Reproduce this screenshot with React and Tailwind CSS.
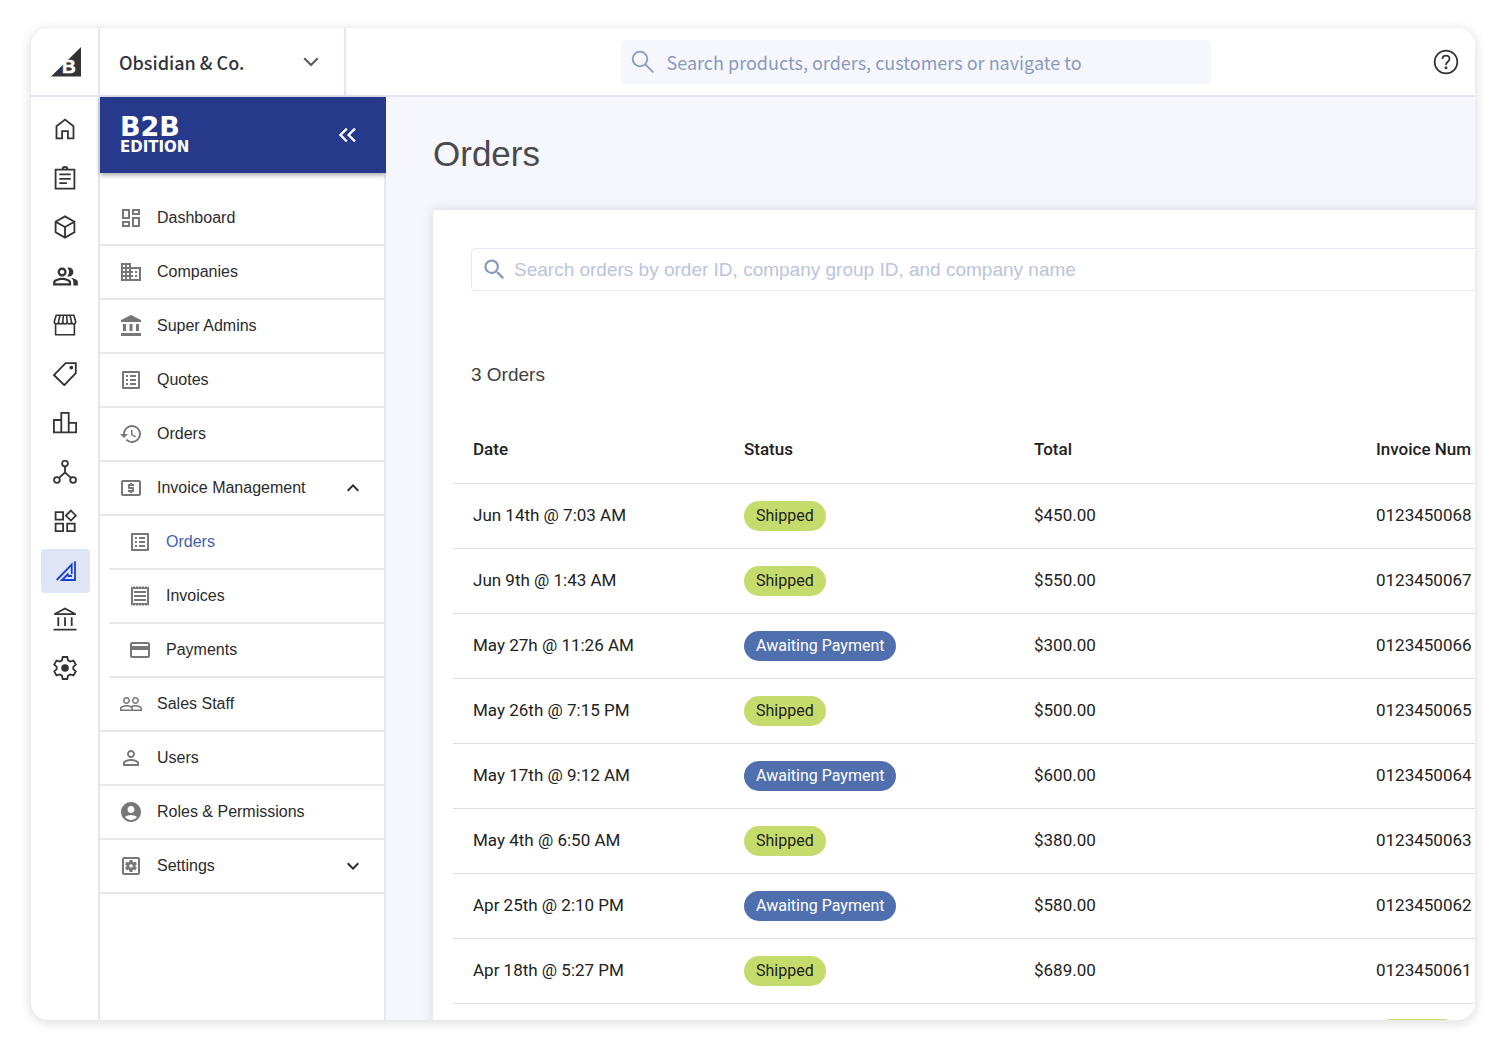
import React from 'react';
import {
    MdOutlineDashboard,
    MdDomain,
    MdAccountBalance,
    MdOutlineListAlt,
    MdHistory,
    MdOutlineLocalAtm,
    MdOutlineReceipt,
    MdOutlinePayment,
    MdPeopleOutline,
    MdPersonOutline,
    MdAccountCircle,
    MdOutlineSettingsApplications,
    MdOutlinePeopleAlt,
    MdSearch,
    MdExpandLess,
    MdExpandMore,
} from 'react-icons/md';

const Icon = ({ children, className = 'size-6', strokeWidth = 1.8 }) => (
    <svg
        viewBox="0 0 24 24"
        className={className}
        fill="none"
        stroke="currentColor"
        strokeWidth={strokeWidth}
        aria-hidden="true"
    >
        {children}
    </svg>
);

const railItems = [
    {
        label: 'Home',
        icon: <Icon><path d="M3.5 9.3 12 2.6l8.5 6.7v12h-5.6v-7.2H9.1v7.2H3.5z" /></Icon>,
    },
    {
        label: 'Orders',
        icon: (
            <Icon>
                <path d="M2.6 3.6h18.8v19H2.6zM6.3 8.4h11.4M6.3 12.8h11.4M6.3 17.2h7.6" />
                <path d="M9.6 3.4a2.4 2.4 0 0 1 4.8 0" />
            </Icon>
        ),
    },
    {
        label: 'Products',
        icon: <Icon><path d="m12 1.4 9.4 5.3v10.6L12 22.6l-9.4-5.3V6.7zM2.6 6.7 12 12l9.4-5.3M12 12v10.6" /></Icon>,
    },
    { label: 'Customers', icon: <MdOutlinePeopleAlt className="size-[27px]" /> },
    {
        label: 'Storefront',
        icon: (
            <Icon strokeWidth={1.6}>
                <path d="M2.6 10.5v11.3h18.8V10.5M3.2 2.2h17.6l1.9 6.5c0 3-4.2 3-4.2 0 0 3-4.3 3-4.3 0 0 3-4.4 3-4.4 0 0 3-4.3 3-4.3 0 0 3-4.2 3-4.2 0zM7 2.2 5.5 8.700M10.4 2.200l-.6 6.500M13.600 2.200l.6 6.500M17 2.200l1.500 6.500" />
            </Icon>
        ),
    },
    {
        label: 'Marketing',
        icon: (
            <Icon>
                <path d="M12.6 1.2h10.2v9.9L11.3 23.2.9 13z" />
                <circle cx="18.3" cy="5.6" r="1" fill="currentColor" />
            </Icon>
        ),
    },
    {
        label: 'Analytics',
        icon: <Icon><path d="M.9 9h7.4v12.4H.9zM8.3 1.9h7.4v19.5H8.3zM15.7 11.8h7.4v9.6h-7.4z" /></Icon>,
    },
    {
        label: 'Channels',
        icon: (
            <Icon>
                <circle cx="12" cy="3.6" r="2.9" />
                <circle cx="3.9" cy="20" r="2.9" />
                <circle cx="20.1" cy="20" r="2.9" />
                <path d="M12 6.5v6M6 17.9l6-5.4 6 5.4" />
            </Icon>
        ),
    },
    {
        label: 'Apps',
        icon: (
            <Icon>
                <path d="M2.6 3.1h7.5v7.5H2.6zM2.6 14.7h7.5v7.5H2.6zM14.2 14.7h7.5v7.5h-7.5zM17.9 1.6l5 5-5 5-5-5z" />
            </Icon>
        ),
    },
    {
        label: 'B2B Edition',
        active: true,
        icon: <Icon><path d="M3.7 22 18.7 6.5V16M22 3.3V22H9l6.5-6.5M14.5 18H19" /></Icon>,
    },
    {
        label: 'Finance',
        icon: (
            <Icon>
                <path d="M1.3 7.2 12 1.4l10.7 5.8zM5.3 10.2V19M12 10.2V19M18.7 10.2V19M.5 22.6h23" />
            </Icon>
        ),
    },
    {
        label: 'Settings',
        icon: (
            <Icon>
                <path d="M9.7 1h4.6l.7 3.3 2.3 1.3 3.2-1 2.3 4-2.5 2.200v2.400l2.500 2.200-2.300 4-3.200-1-2.300 1.300-.7 3.300H9.700L9 19.700l-2.300-1.300-3.200 1-2.300-4 2.500-2.200v-2.400L1.200 8.600l2.300-4 3.200 1L9 4.300z" />
                <circle cx="12" cy="12" r="2.9" fill="currentColor" />
            </Icon>
        ),
    },
];

const menuItems = [
    { label: 'Dashboard', icon: MdOutlineDashboard },
    { label: 'Companies', icon: MdDomain },
    { label: 'Super Admins', icon: MdAccountBalance },
    { label: 'Quotes', icon: MdOutlineListAlt },
    { label: 'Orders', icon: MdHistory },
    {
        label: 'Invoice Management',
        icon: MdOutlineLocalAtm,
        open: true,
        children: [
            { label: 'Orders', icon: MdOutlineListAlt, active: true },
            { label: 'Invoices', icon: MdOutlineReceipt },
            { label: 'Payments', icon: MdOutlinePayment },
        ],
    },
    { label: 'Sales Staff', icon: MdPeopleOutline },
    { label: 'Users', icon: MdPersonOutline },
    { label: 'Roles & Permissions', icon: MdAccountCircle },
    { label: 'Settings', icon: MdOutlineSettingsApplications, open: false },
];

const orders = [
    { date: 'Jun 14th @ 7:03 AM', status: 'Shipped', total: '$450.00', invoice: '0123450068' },
    { date: 'Jun 9th @ 1:43 AM', status: 'Shipped', total: '$550.00', invoice: '0123450067' },
    { date: 'May 27h @ 11:26 AM', status: 'Awaiting Payment', total: '$300.00', invoice: '0123450066' },
    { date: 'May 26th @ 7:15 PM', status: 'Shipped', total: '$500.00', invoice: '0123450065' },
    { date: 'May 17th @ 9:12 AM', status: 'Awaiting Payment', total: '$600.00', invoice: '0123450064' },
    { date: 'May 4th @ 6:50 AM', status: 'Shipped', total: '$380.00', invoice: '0123450063' },
    { date: 'Apr 25th @ 2:10 PM', status: 'Awaiting Payment', total: '$580.00', invoice: '0123450062' },
    { date: 'Apr 18th @ 5:27 PM', status: 'Shipped', total: '$689.00', invoice: '0123450061' },
];

const StatusPill = ({ status }) => (
    <span
        className={`inline-flex h-[30px] items-center rounded-full px-3 text-base ${
            status === 'Shipped' ? 'bg-[#c5dc6c] text-[#222]' : 'bg-[#506fae] text-white'
        }`}
    >
        {status}
    </span>
);

const Logo = () => (
    <svg viewBox="0 0 30 30" className="size-[30px]" aria-hidden="true">
        <path d="M30 0v29.5H0z" fill="#343438" />
        <text x="11" y="25.5" fill="#fff" stroke="#fff" strokeWidth=".5" fontSize="19" fontWeight="700" fontFamily="Liberation Sans, sans-serif">
            B
        </text>
    </svg>
);

const TopBar = () => (
    <header className="flex h-[69px] shrink-0 border-b-2 border-[#e4e6f4] bg-white font-['Noto_Sans_CJK_SC',sans-serif]">
        <a href="#home" aria-label="Home" className="flex w-[69px] shrink-0 items-center justify-center border-r-2 border-[#e4e6f4] pl-0.5">
            <Logo />
        </a>
        <button className="flex w-[246px] shrink-0 items-center justify-between border-r-2 border-[#e4e6f4] pl-[19px] pr-6 text-lg font-medium text-[#313440]">
            Obsidian &amp; Co.
            <Icon className="size-[18px] text-[#5c5e66]" strokeWidth={3}><path d="m3 7 9 9 9-9" /></Icon>
        </button>
        <div className="flex min-w-0 flex-1 items-center pl-[10px]">
            <div className="flex-1 pl-4" />
            <label className="flex h-11 w-[590px] items-center gap-3 rounded-[4px] bg-[#f6f7fc] px-[10px] text-[#8c99bd]">
                <Icon className="size-6 shrink-0">
                    <circle cx="9" cy="9" r="7.3" />
                    <path d="m14.3 14.3 8 8" />
                </Icon>
                <input
                    type="search"
                    aria-label="Search products, orders, customers"
                    placeholder="Search products, orders, customers or navigate to"
                    className="min-w-0 flex-1 bg-transparent text-lg outline-none placeholder:text-[#8c99bd]"
                />
            </label>
            <div className="flex flex-1 justify-end pr-4">
                <button aria-label="Help" className="text-[#343438]">
                    <Icon className="size-[26px]" strokeWidth={1.6}>
                        <circle cx="12" cy="12" r="10.5" />
                        <path d="M8.8 9.2c0-4 6.4-4 6.4 0 0 2.6-3.2 2.6-3.2 5.5" />
                        <circle cx="12" cy="17.3" r=".6" fill="currentColor" />
                    </Icon>
                </button>
            </div>
        </div>
    </header>
);

const Rail = () => (
    <nav aria-label="Store" className="flex w-[69px] shrink-0 flex-col items-center gap-[5px] border-r-2 border-[#e4e6f4] bg-white pl-0.5 pt-[11px] text-[#343438]">
        {railItems.map((item) => (
            <a
                key={item.label}
                href="#store"
                aria-label={item.label}
                className={`flex h-11 w-[49px] shrink-0 items-center justify-center rounded-[4px] pb-0.5 pr-px ${
                    item.active ? 'bg-[#dfe4f6] text-[#1a41d6]' : ''
                }`}
            >
                {item.icon}
            </a>
        ))}
    </nav>
);

const MenuRow = ({ item }) => {
    const ItemIcon = item.icon;
    const Chevron = item.open ? MdExpandLess : MdExpandMore;
    const Tag = item.open === undefined ? 'a' : 'button';

    return (
        <Tag
            href={Tag === 'a' ? '#menu' : undefined}
            className={`flex h-[54px] w-full items-center gap-[14px] border-b-2 border-[#e8e8ea] px-[19px] text-left text-base ${
                item.active ? 'text-[#3f5fb0]' : 'text-[#2b2b2e]'
            }`}
        >
            <ItemIcon className="size-6 shrink-0 text-[#77777a]" />
            <span className="flex-1">{item.label}</span>
            {item.open !== undefined && <Chevron className="size-6" />}
        </Tag>
    );
};

const SideMenu = () => (
    <aside className="w-[286px] shrink-0 border-r-2 border-[#e6e7f0] bg-white">
        <div className="-mr-[2px] flex h-[76px] items-center justify-between bg-[#27398a] pl-5 pr-6 text-white shadow-[0_2px_5px_rgba(0,0,0,0.35)]">
            <div className="flex flex-col font-['DejaVu_Sans',sans-serif] font-bold">
                <span className="text-[27px] leading-6">B2B</span>
                <span className="text-[15px] leading-4">EDITION</span>
            </div>
            <button aria-label="Collapse menu">
                <Icon className="size-7" strokeWidth={2}><path d="M11 6.500 5.500 12l5.500 5.500M18 6.500 12.500 12l5.500 5.500" /></Icon>
            </button>
        </div>
        <ul className="pt-[19px]">
            {menuItems.map((item) => (
                <li key={item.label}>
                    <MenuRow item={item} />
                    {item.children && (
                        <ul className="pl-[9px]">
                            {item.children.map((child) => (
                                <li key={child.label}>
                                    <MenuRow item={child} />
                                </li>
                            ))}
                        </ul>
                    )}
                </li>
            ))}
        </ul>
    </aside>
);

const OrdersTable = () => (
    <table className="mt-[25px] w-[1400px] table-fixed border-collapse text-left font-[Roboto,sans-serif] text-[17px] text-[#222]">
        <colgroup>
            <col className="w-[271px]" />
            <col className="w-[290px]" />
            <col className="w-[342px]" />
            <col />
        </colgroup>
        <thead>
            <tr className="h-[69px] border-b border-[#dfdfe2]">
                <th className="pl-5 pt-0.5 font-medium">Date</th>
                <th className="pl-5 pt-0.5 font-medium">Status</th>
                <th className="pl-5 pt-0.5 font-medium">Total</th>
                <th className="pl-5 pt-0.5 font-medium">Invoice Num</th>
            </tr>
        </thead>
        <tbody>
            {orders.map((order) => (
                <tr key={order.invoice} className="h-[65px] border-b border-[#dfdfe2]">
                    <td className="pl-5">{order.date}</td>
                    <td className="pl-5"><StatusPill status={order.status} /></td>
                    <td className="pl-5">{order.total}</td>
                    <td className="pl-5">{order.invoice}</td>
                </tr>
            ))}
            <tr className="h-[65px]">
                <td colSpan={3} />
                <td className="pl-5 pt-[15px] align-top"><StatusPill status="Shipped" /></td>
            </tr>
        </tbody>
    </table>
);

const App = () => {
    return (
        <div className="h-screen overflow-hidden bg-white pb-7 pl-[31px] pr-9 pt-7 font-['Liberation_Sans',Arial,sans-serif]">
            <div className="flex h-full flex-col overflow-hidden rounded-[18px] shadow-[0_2px_10px_3px_rgba(0,0,0,0.1)]">
                <TopBar />
                <div className="flex min-h-0 flex-1">
                    <Rail />
                    <SideMenu />
                    <main className="min-w-0 flex-1 overflow-hidden bg-[#f6f7fc] pl-[47px]">
                        <h1 className="pt-9 text-[35px] leading-[42px] text-[#4a4a4e]">Orders</h1>
                        <section className="mt-[35px] min-h-full w-[1440px] rounded-[4px] bg-white pl-5 pt-[38px] shadow-[0_0_12px_rgba(40,40,80,0.16)]">
                            <label className="ml-[18px] flex h-[43px] items-center gap-[6px] rounded-[4px] border border-[#e6e8f3] pl-[9px] text-[#8c99bd]">
                                <MdSearch className="size-[27px] shrink-0" />
                                <input
                                    type="search"
                                    aria-label="Search orders"
                                    placeholder="Search orders by order ID, company group ID, and company name"
                                    className="min-w-0 flex-1 bg-transparent pt-0.5 text-[19px] outline-none placeholder:text-[#bcc3dc]"
                                />
                            </label>
                            <p className="ml-[18px] mt-[70px] text-[19px] leading-7 text-[#414145]">3 Orders</p>
                            <OrdersTable />
                        </section>
                    </main>
                </div>
            </div>
        </div>
    );
};

export default App;
